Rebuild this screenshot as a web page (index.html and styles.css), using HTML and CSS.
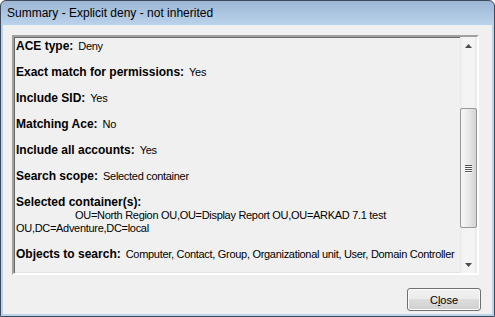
FILE: index.html
```html
<!DOCTYPE html>
<html lang="en">
<head>
    <meta charset="UTF-8">
    <title>Summary - Explicit deny - not inherited</title>
    <link rel="stylesheet" href="styles.css">
</head>
<body>
    <div class="window">
        <div class="titlebar">Summary - Explicit deny - not inherited</div>
        <div class="client">
            <div class="summary">
                <div class="summary-text">
                    <div class="item"><b>ACE type:</b><span class="value">Deny</span></div>
                    <div class="item"><b>Exact match for permissions:</b><span class="value">Yes</span></div>
                    <div class="item"><b>Include SID:</b><span class="value">Yes</span></div>
                    <div class="item"><b>Matching Ace:</b><span class="value">No</span></div>
                    <div class="item"><b>Include all accounts:</b><span class="value">Yes</span></div>
                    <div class="item"><b>Search scope:</b><span class="value">Selected container</span></div>
                    <div class="item tall">
                        <b class="heading">Selected container(s):</b>
                        <div class="value-line indent">OU=North Region OU,OU=Display Report OU,OU=ARKAD 7.1 test</div>
                        <div class="value-line">OU,DC=Adventure,DC=local</div>
                    </div>
                    <div class="item"><b>Objects to search:</b><span class="value">Computer, Contact, Group, Organizational unit, User, Domain Controller</span></div>
                    <div class="item"><b>Selected permission(s):</b></div>
                </div>
                <div class="scrollbar">
                    <div class="arrow">
                        <svg width="7" height="4" viewBox="0 0 7 4"><polygon points="0,4 7,4 3.5,0" fill="#4d4d4d"/></svg>
                    </div>
                    <div class="thumb">
                        <div class="grip"><i></i><i></i><i></i><i></i></div>
                    </div>
                    <div class="track"></div>
                    <div class="arrow">
                        <svg width="7" height="4" viewBox="0 0 7 4"><polygon points="0,0 7,0 3.5,4" fill="#4d4d4d"/></svg>
                    </div>
                </div>
            </div>
            <div class="buttons">
                <button class="btn">C<u>l</u>ose</button>
            </div>
        </div>
    </div>
</body>
</html>
```
FILE: styles.css
```css
body {
    margin: 0;
    font-family: 'Liberation Sans', Arial, sans-serif;
    color: #000;
}
.window {
    width: 495px;
    height: 317px;
    box-sizing: border-box;
    border: 1px solid #3c4a5a;
    border-radius: 6px 6px 0 0;
    background: linear-gradient(#9cb7d5, #bad2ea 24px, #bad2ea);
    display: flex;
    flex-direction: column;
    overflow: hidden;
}
.titlebar {
    height: 24px;
    line-height: 24px;
    padding-left: 6px;
    font-size: 12px;
    color: #000;
}
.client {
    flex: 1;
    display: flex;
    flex-direction: column;
    margin: 0 2px 2px 2px;
    padding: 10px 13px 0 9px;
    background: #f0f0f0;
}
.summary {
    height: 240px;
    box-sizing: border-box;
    display: flex;
    border-style: solid;
    border-width: 2px;
    border-color: #a0a0a0 #ffffff #ffffff #a0a0a0;
    box-shadow: inset 1px 1px 0 #696969, inset -1px -1px 0 #e3e3e3;
    background: #f0f0f0;
}
.summary-text {
    flex: 1;
    overflow: hidden;
    padding: 3px 0 0 2px;
    font-size: 11px;
    line-height: 13px;
}
.item {
    height: 13px;
    margin-bottom: 13px;
    white-space: nowrap;
}
.item.tall {
    height: 39px;
}
.item b {
    font-size: 12px;
    font-weight: bold;
}
.item b.heading {
    display: block;
}
.value,
.value-line {
    letter-spacing: -0.3px;
}
.value {
    margin-left: 5px;
}
.indent {
    padding-left: 59px;
}
.scrollbar {
    width: 17px;
    display: flex;
    flex-direction: column;
    background: linear-gradient(to right, #e6e6e6, #f4f4f4 2px, #f4f4f4 14px, #e6e6e6);
}
.arrow {
    height: 17px;
    display: flex;
    align-items: center;
    justify-content: center;
}
.thumb {
    margin-top: 54px;
    height: 120px;
    box-sizing: border-box;
    border: 1px solid #979797;
    border-radius: 2px;
    background: linear-gradient(to right, #f6f6f6, #e9e9e9 50%, #d3d3d3);
    display: flex;
    align-items: center;
    justify-content: center;
}
.grip i {
    display: block;
    width: 7px;
    height: 1px;
    margin: 1px 0;
    background: #555;
    box-shadow: 0 1px 0 #fff;
}
.track {
    flex: 1;
}
.buttons {
    display: flex;
    justify-content: flex-end;
    padding-top: 13px;
    margin-right: -2px;
}
.btn {
    width: 74px;
    height: 23px;
    border: 1px solid #707070;
    border-radius: 3px;
    background: linear-gradient(#f2f2f2, #ebebeb 50%, #dddddd 50%, #cfcfcf);
    box-shadow: inset 0 0 0 1px #fcfcfc;
    font-family: 'Liberation Sans', Arial, sans-serif;
    font-size: 11px;
    color: #000;
    padding: 0;
}
```
